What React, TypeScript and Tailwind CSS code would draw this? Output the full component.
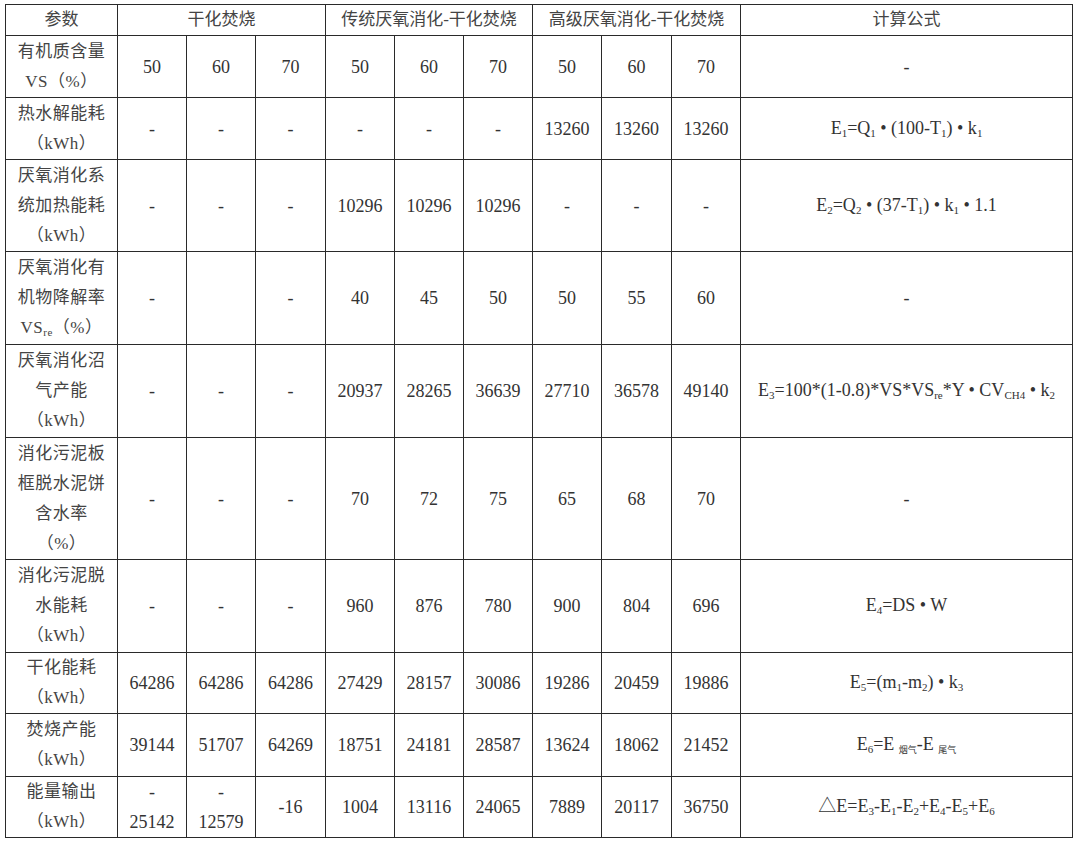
import React from "react";

const Sub = ({ children }: { children: React.ReactNode }) => (
  <span className="relative top-[3px] text-[11px]">{children}</span>
);

const D = "-";

type Row = {
  label: React.ReactNode[];
  h: string;
  cells: React.ReactNode[];
  formula: React.ReactNode;
};

const rows: Row[] = [
  {
    label: ["有机质含量", "VS（%）"],
    h: "h-[62px]",
    cells: ["50", "60", "70", "50", "60", "70", "50", "60", "70"],
    formula: D,
  },
  {
    label: ["热水解能耗", "（kWh）"],
    h: "h-[62px]",
    cells: [D, D, D, D, D, D, "13260", "13260", "13260"],
    formula: (
      <>
        E<Sub>1</Sub>=Q<Sub>1</Sub> • (100-T<Sub>1</Sub>) • k<Sub>1</Sub>
      </>
    ),
  },
  {
    label: ["厌氧消化系", "统加热能耗", "（kWh）"],
    h: "h-[92px]",
    cells: [D, D, D, "10296", "10296", "10296", D, D, D],
    formula: (
      <>
        E<Sub>2</Sub>=Q<Sub>2</Sub> • (37-T<Sub>1</Sub>) • k<Sub>1</Sub> • 1.1
      </>
    ),
  },
  {
    label: [
      "厌氧消化有",
      "机物降解率",
      <>
        VS<Sub>re</Sub>（%）
      </>,
    ],
    h: "h-[93px]",
    cells: [D, "", D, "40", "45", "50", "50", "55", "60"],
    formula: D,
  },
  {
    label: ["厌氧消化沼", "气产能", "（kWh）"],
    h: "h-[93px]",
    cells: [D, D, D, "20937", "28265", "36639", "27710", "36578", "49140"],
    formula: (
      <>
        E<Sub>3</Sub>=100*(1-0.8)*VS*VS<Sub>re</Sub>*Y • CV<Sub>CH4</Sub> • k
        <Sub>2</Sub>
      </>
    ),
  },
  {
    label: ["消化污泥板", "框脱水泥饼", "含水率", "（%）"],
    h: "h-[122px]",
    cells: [D, D, D, "70", "72", "75", "65", "68", "70"],
    formula: D,
  },
  {
    label: ["消化污泥脱", "水能耗", "（kWh）"],
    h: "h-[93px]",
    cells: [D, D, D, "960", "876", "780", "900", "804", "696"],
    formula: (
      <>
        E<Sub>4</Sub>=DS • W
      </>
    ),
  },
  {
    label: ["干化能耗", "（kWh）"],
    h: "h-[61px]",
    cells: ["64286", "64286", "64286", "27429", "28157", "30086", "19286", "20459", "19886"],
    formula: (
      <>
        E<Sub>5</Sub>=(m<Sub>1</Sub>-m<Sub>2</Sub>) • k<Sub>3</Sub>
      </>
    ),
  },
  {
    label: ["焚烧产能", "（kWh）"],
    h: "h-[63px]",
    cells: ["39144", "51707", "64269", "18751", "24181", "28587", "13624", "18062", "21452"],
    formula: (
      <>
        E<Sub>6</Sub>=E <span className="relative top-[3px] text-[9px]">烟气</span>-E{" "}
        <span className="relative top-[3px] text-[9px]">尾气</span>
      </>
    ),
  },
  {
    label: ["能量输出", "（kWh）"],
    h: "h-[61px]",
    cells: [["-", "25142"], ["-", "12579"], "-16", "1004", "13116", "24065", "7889", "20117", "36750"],
    formula: (
      <>
        △E=E<Sub>3</Sub>-E<Sub>1</Sub>-E<Sub>2</Sub>+E<Sub>4</Sub>-E<Sub>5</Sub>+E<Sub>6</Sub>
      </>
    ),
  },
];

const cell = "border border-[#2a2a2a] text-center align-middle p-0";

const Lines = ({ items }: { items: React.ReactNode[] }) => (
  <div className="flex flex-col items-center">
    {items.map((t, k) => (
      <div key={k} className="h-[30px] overflow-visible whitespace-nowrap leading-[30px]">
        {t}
      </div>
    ))}
  </div>
);

export default function App() {
  return (
    <div
      className="min-h-[845px] w-[1080px] bg-white pl-[5px] pt-[4px] text-[#333]"
      style={{ fontFamily: '"Liberation Serif", "Noto Sans CJK SC", serif' }}
    >
      <table className="w-[1067px] table-fixed border-collapse text-[18px] leading-[28px]">
        <colgroup>
          <col className="w-[112px]" />
          <col className="w-[69px]" />
          <col className="w-[69px]" />
          <col className="w-[70px]" />
          <col className="w-[69px]" />
          <col className="w-[69px]" />
          <col className="w-[69px]" />
          <col className="w-[69px]" />
          <col className="w-[70px]" />
          <col className="w-[69px]" />
          <col className="w-[332px]" />
        </colgroup>
        <thead>
          <tr className="h-[31px] text-[17px] text-[#444]">
            <th className={`${cell} font-normal`}>
              <Lines items={["参数"]} />
            </th>
            <th colSpan={3} className={`${cell} font-normal`}>
              <Lines items={["干化焚烧"]} />
            </th>
            <th colSpan={3} className={`${cell} font-normal`}>
              <Lines items={["传统厌氧消化-干化焚烧"]} />
            </th>
            <th colSpan={3} className={`${cell} font-normal`}>
              <Lines items={["高级厌氧消化-干化焚烧"]} />
            </th>
            <th className={`${cell} font-normal`}>
              <Lines items={["计算公式"]} />
            </th>
          </tr>
        </thead>
        <tbody>
          {rows.map((r, i) => (
            <tr key={i} className={r.h}>
              <td className={`${cell} text-[17px] tracking-[0.5px] text-[#444]`}>
                <Lines items={r.label} />
              </td>
              {r.cells.map((c, j) => (
                <td key={j} className={cell}>
                  {Array.isArray(c) ? <Lines items={c} /> : c}
                </td>
              ))}
              <td className={cell}>{r.formula}</td>
            </tr>
          ))}
        </tbody>
      </table>
    </div>
  );
}
